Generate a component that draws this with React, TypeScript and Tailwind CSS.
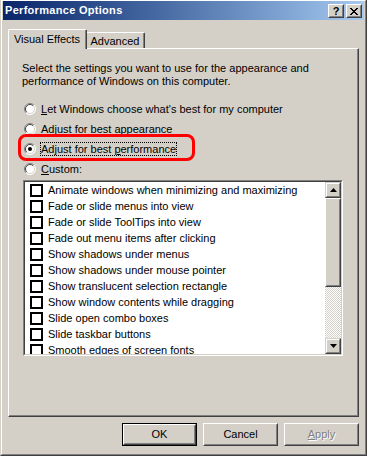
import React from "react";

const effects = [
  "Animate windows when minimizing and maximizing",
  "Fade or slide menus into view",
  "Fade or slide ToolTips into view",
  "Fade out menu items after clicking",
  "Show shadows under menus",
  "Show shadows under mouse pointer",
  "Show translucent selection rectangle",
  "Show window contents while dragging",
  "Slide open combo boxes",
  "Slide taskbar buttons",
  "Smooth edges of screen fonts",
];

function Raised({ className = "", children }: { className?: string; children?: React.ReactNode }) {
  return (
    <div className={`border border-t-white border-l-white border-r-[#404040] border-b-[#404040] bg-[#d4d0c8] ${className}`}>
      <div className="flex h-full w-full items-center justify-center border border-t-[#d4d0c8] border-l-[#d4d0c8] border-r-[#808080] border-b-[#808080]">
        {children}
      </div>
    </div>
  );
}

function ScrollBtn({ down }: { down?: boolean }) {
  return (
    <div className="h-[16px] w-[16px] border border-t-[#d4d0c8] border-l-[#d4d0c8] border-r-[#404040] border-b-[#404040] bg-[#d4d0c8]">
      <div className="flex h-full w-full items-center justify-center border border-t-white border-l-white border-r-[#808080] border-b-[#808080]">
        <svg width="7" height="4" viewBox="0 0 7 4">
          {down ? <polygon points="0,0 7,0 3.5,4" fill="#000" /> : <polygon points="3.5,0 7,4 0,4" fill="#000" />}
        </svg>
      </div>
    </div>
  );
}

function Radio({ checked }: { checked?: boolean }) {
  return (
    <svg width="12" height="12" viewBox="0 0 12 12" className="shrink-0">
      <circle cx="6" cy="6" r="5.5" fill="#fff" />
      <path d="M2.1 9.9 A5.5 5.5 0 0 1 9.9 2.1" stroke="#808080" fill="none" />
      <path d="M9.9 2.1 A5.5 5.5 0 0 1 2.1 9.9" stroke="#fff" fill="none" />
      <path d="M2.8 9.2 A4.5 4.5 0 0 1 9.2 2.8" stroke="#404040" fill="none" />
      <path d="M9.2 2.8 A4.5 4.5 0 0 1 2.8 9.2" stroke="#d4d0c8" fill="none" />
      {checked && <circle cx="6" cy="6" r="2" fill="#000" />}
    </svg>
  );
}

const closeRows = ["11000011", "01100110", "00111100", "00011000", "00111100", "01100110", "11000011"];

function CloseGlyph() {
  return (
    <svg width="8" height="7" viewBox="0 0 8 7" shapeRendering="crispEdges">
      {closeRows.map((row, y) =>
        row.split("").map((c, x) => (c === "1" ? <rect key={`${x}-${y}`} x={x} y={y} width="1" height="1" fill="#000" /> : null))
      )}
    </svg>
  );
}

export default function App() {
  return (
    <div className="h-[456px] w-[367px] border-b border-l border-r border-b-[#404040] border-l-[#d4d0c8] border-r-[#404040] bg-[#d4d0c8] font-['Liberation_Sans',Arial,sans-serif] text-[11px] text-black">
      <div className="flex h-full flex-col border border-t-white border-l-white border-r-[#808080] border-b-[#808080] px-px">
        {/* caption */}
        <div className="flex h-[19px] items-center bg-linear-to-r from-[#0a246a] to-[#a6caf0] pl-[2px] pr-[2px]">
          <span className="text-[11px] font-bold tracking-[0.3px] text-white">Performance Options</span>
          <div className="ml-auto flex gap-[2px] pt-px">
            <Raised className="h-[14px] w-[16px]">
              <span className="text-[11px] font-bold leading-none">?</span>
            </Raised>
            <Raised className="h-[14px] w-[16px]">
              <CloseGlyph />
            </Raised>
          </div>
        </div>

        <div className="flex flex-col px-[5px]">
          {/* tabs */}
          <div className="mt-[9px] flex h-[19px] items-end">
            <div className="relative z-10 -mb-px h-[20px] w-[79px] rounded-t-[2px] border-l border-t border-r border-l-white border-t-white border-r-[#404040] bg-[#d4d0c8]">
              <div className="flex h-full items-center justify-center border-r border-r-[#808080] pb-[1px]">Visual Effects</div>
            </div>
            <div className="h-[16px] w-[58px] rounded-tr-[2px] border-t border-r border-t-white border-r-[#404040]">
              <div className="flex h-full items-center justify-center border-r border-r-[#808080] pt-px">Advanced</div>
            </div>
          </div>

          {/* panel */}
          <div className="h-[369px] border border-t-white border-l-white border-r-[#404040] border-b-[#404040]">
            <div className="h-full border-r border-b border-r-[#808080] border-b-[#808080] pl-[13px] pt-[13px]">
              <p className="leading-[13px]">
                Select the settings you want to use for the appearance and
                <br />
                performance of Windows on this computer.
              </p>

              <div className="relative mt-[11px] flex flex-col">
                {[
                  { pre: "", key: "L", post: "et Windows choose what's best for my computer" },
                  { pre: "Adjust for best ", key: "a", post: "ppearance" },
                  { pre: "Adjust for best ", key: "p", post: "erformance", checked: true },
                  { pre: "", key: "C", post: "ustom:" },
                ].map((r, i) => (
                  <div key={i} className="flex h-[20px] items-center gap-[4px] pl-[2px]">
                    <Radio checked={r.checked} />
                    <span className={`border px-0 leading-[12px] ${r.checked ? "border-dotted border-black" : "border-transparent"}`}>
                      {r.pre}
                      <span className="underline underline-offset-[1px]">{r.key}</span>
                      {r.post}
                    </span>
                  </div>
                ))}
                <div className="pointer-events-none absolute left-[-4px] top-[35px] h-[27px] w-[177px] rounded-[8px] border-[3px] border-[#ff0000]" />
              </div>

              {/* effects list */}
              <div className="ml-px mt-px h-[176px] w-[320px] border border-t-[#808080] border-l-[#808080] border-r-white border-b-white">
                <div className="flex h-full border border-t-[#404040] border-l-[#404040] border-r-[#d4d0c8] border-b-[#d4d0c8] bg-white">
                  <div className="flex-1 overflow-hidden">
                    {effects.map((e) => (
                      <div key={e} className="flex h-[16px] shrink-0 items-center gap-[5px] pl-[5px]">
                        <div className="h-[13px] w-[13px] shrink-0 border-2 border-black bg-white" />
                        <span className="whitespace-nowrap">{e}</span>
                      </div>
                    ))}
                  </div>
                  <div className="flex w-[16px] flex-col">
                    <ScrollBtn />
                    <Raised className="h-[89px] w-[16px]" />
                    <div className="flex-1 bg-[repeating-conic-gradient(#ffffff_0_25%,#d4d0c8_0_50%)] bg-[length:2px_2px]" />
                    <ScrollBtn down />
                  </div>
                </div>
              </div>
            </div>
          </div>

          {/* buttons */}
          <div className="mt-[6px] flex justify-end gap-[6px]">
            <div className="h-[23px] w-[75px] border border-black">
              <Raised className="h-full w-full">OK</Raised>
            </div>
            <Raised className="h-[23px] w-[75px]">Cancel</Raised>
            <Raised className="h-[23px] w-[75px]">
              <span className="text-[#808080] [text-shadow:1px_1px_0_#fff]">
                <span className="underline underline-offset-[1px]">A</span>pply
              </span>
            </Raised>
          </div>
        </div>
      </div>
    </div>
  );
}
